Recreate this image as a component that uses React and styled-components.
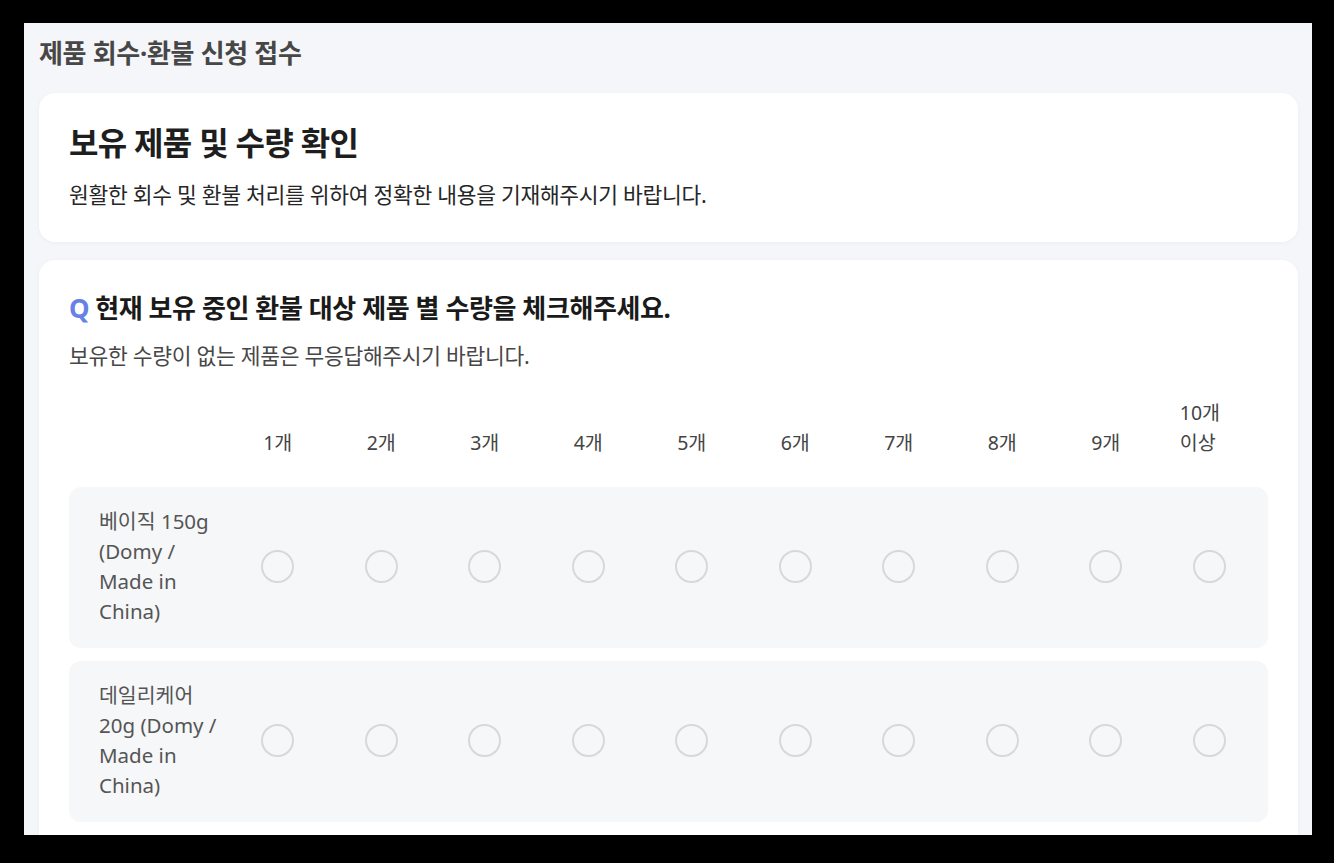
import React from "react";
import styled, { createGlobalStyle } from "styled-components";

const Global = createGlobalStyle`
  html, body { margin: 0; padding: 0; background: #000; }
  body { font-family: "Noto Sans", "Noto Sans CJK KR", sans-serif; }
  * { box-sizing: border-box; }
`;

const Frame = styled.div`
  margin: 23px 0 0 24px;
  width: 1288px;
  height: 812px;
  overflow: hidden;
  background: #f5f6f9;
  padding: 13px 14px 0 15px;
  display: flex;
  flex-direction: column;
`;

const PageTitle = styled.h1`
  margin: 0 0 23px;
  font-size: 26px;
  line-height: 34px;
  font-weight: 700;
  color: #474747;
  letter-spacing: -0.3px;
`;

const Card = styled.section`
  background: #fff;
  border-radius: 16px;
  padding: ${(p) => p.$pad || "30px 30px 32px"};
  box-shadow: 0 1px 4px rgba(20, 30, 60, 0.04);
  margin-bottom: 18px;
  flex-shrink: 0;
`;

const CardTitle = styled.h2`
  margin: 0 0 17px;
  font-size: 32px;
  line-height: 40px;
  font-weight: 700;
  color: #1e1e1e;
  letter-spacing: -0.7px;
`;

const CardText = styled.p`
  margin: 0;
  font-size: 21.5px;
  line-height: 30px;
  color: #262626;
  letter-spacing: -0.3px;
`;

const Question = styled.h3`
  margin: 0 0 15px;
  font-size: 26px;
  line-height: 36px;
  font-weight: 700;
  color: #1a1a1a;
  letter-spacing: -0.4px;
`;

const QMark = styled.span`
  color: #6782e6;
  margin-right: 6px;
`;

const Hint = styled.p`
  margin: 0 0 27px;
  font-size: 21.5px;
  line-height: 30px;
  color: #474747;
  letter-spacing: -0.3px;
`;

const Grid = styled.div`
  display: grid;
  grid-template-columns: 127px repeat(10, 1fr);
  align-items: center;
  padding: 0 7px 0 30px;
`;

const HeadRow = styled(Grid)`
  margin-bottom: 29px;
  align-items: end;
`;

const HeadCell = styled.div`
  text-align: center;
  font-size: 19.5px;
  line-height: 30px;
  color: #444;
  padding-right: ${(p) => (p.$wrap ? "13px" : "0")};
`;

const Wrapped = styled.span`
  display: inline-block;
  max-width: 46px;
  text-align: left;
`;

const Rows = styled.div`
  display: flex;
  flex-direction: column;
  gap: 13px;
`;

const Row = styled(Grid)`
  background: #f6f7f9;
  border-radius: 12px;
  padding-top: 19px;
  padding-bottom: 22px;
`;

const Label = styled.div`
  font-size: 20.5px;
  line-height: 30px;
  color: #555;
`;

const RadioCell = styled.label`
  display: flex;
  justify-content: center;
  align-items: center;
`;

const Radio = styled.input`
  appearance: none;
  margin: 0;
  width: 33px;
  height: 33px;
  border-radius: 50%;
  border: 2.5px solid #d8d8da;
  background: transparent;
  cursor: pointer;
`;

const counts = ["1개", "2개", "3개", "4개", "5개", "6개", "7개", "8개", "9개"];
const products = [
  "베이직 150g (Domy / Made in China)",
  "데일리케어 20g (Domy / Made in China)",
];

export default function App() {
  return (
    <>
      <Global />
      <Frame>
        <PageTitle>제품 회수·환불 신청 접수</PageTitle>
        <Card>
          <CardTitle>보유 제품 및 수량 확인</CardTitle>
          <CardText>원활한 회수 및 환불 처리를 위하여 정확한 내용을 기재해주시기 바랍니다.</CardText>
        </Card>
        <Card $pad="30px 30px 30px">
          <Question>
            <QMark>Q</QMark>현재 보유 중인 환불 대상 제품 별 수량을 체크해주세요.
          </Question>
          <Hint>보유한 수량이 없는 제품은 무응답해주시기 바랍니다.</Hint>
          <HeadRow>
            <div />
            {counts.map((c) => (
              <HeadCell key={c}>{c}</HeadCell>
            ))}
            <HeadCell $wrap>
              <Wrapped>10개 이상</Wrapped>
            </HeadCell>
          </HeadRow>
          <Rows>
            {products.map((p, i) => (
              <Row key={p}>
                <Label>{p}</Label>
                {Array.from({ length: 10 }).map((_, j) => (
                  <RadioCell key={j}>
                    <Radio type="radio" name={`product-${i}`} value={j + 1} />
                  </RadioCell>
                ))}
              </Row>
            ))}
          </Rows>
        </Card>
      </Frame>
    </>
  );
}
